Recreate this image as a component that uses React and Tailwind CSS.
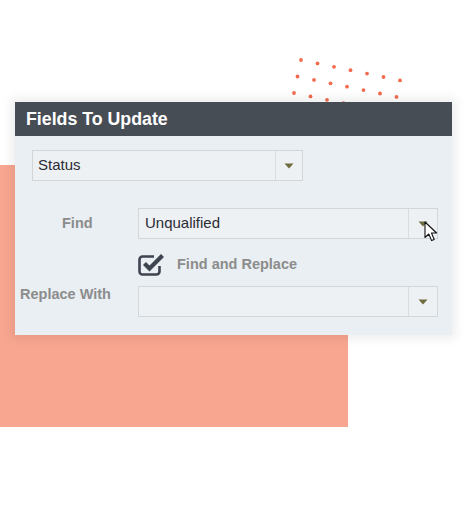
import React from "react";

const dotRows = [
  { x: 301, y: 60 },
  { x: 297.5, y: 76.5 },
  { x: 294, y: 93 },
  { x: 290.5, y: 109.5 },
];

function Dots() {
  const dots = [];
  dotRows.forEach((r, ri) => {
    for (let i = 0; i < 7; i++) {
      dots.push(
        <circle key={ri + "-" + i} cx={r.x + i * 16.5 - 270} cy={r.y + i * 3.4 - 50} r="1.9" fill="#f26b4e" />
      );
    }
  });
  return (
    <svg className="absolute left-[270px] top-[50px]" width="150" height="90" viewBox="0 0 150 90">
      {dots}
    </svg>
  );
}

function Arrow() {
  return (
    <svg width="10" height="6" viewBox="0 0 10 6">
      <polygon points="0.5,0.5 9.5,0.5 5,5.5" fill="#6e6c3c" />
    </svg>
  );
}

function Select({ width, text, btn, pl }) {
  return (
    <div className={`flex h-[31px] border border-[#d2d6d9] bg-[#edf1f3] ${width}`}>
      <div className={`flex flex-1 items-center text-[15px] text-[#2c2c36] ${pl}`}>{text}</div>
      <div className={`flex items-center justify-center border-l border-[#d9dde0] ${btn}`}>
        <Arrow />
      </div>
    </div>
  );
}

function Check() {
  return (
    <svg width="27" height="24" viewBox="0 0 27 24">
      <path
        d="M21.5 13 V18.5 a3 3 0 0 1 -3 3 H4.5 a3 3 0 0 1 -3 -3 V6.5 a3 3 0 0 1 3 -3 H16"
        fill="none"
        stroke="#3e4450"
        strokeWidth="2.6"
      />
      <path d="M6.5 10.5 L11.5 15.5 L24.5 2.5" fill="none" stroke="#3e4450" strokeWidth="4.2" strokeLinejoin="miter" />
    </svg>
  );
}

function Cursor() {
  return (
    <svg className="absolute left-[424px] top-[221px]" width="14" height="22" viewBox="0 0 14 22">
      <path
        d="M1 1 L1 16.5 L4.8 13 L7.6 19.6 L10.2 18.5 L7.5 12 L12.6 12 Z"
        fill="#ffffff"
        stroke="#111111"
        strokeWidth="1.1"
        strokeLinejoin="round"
      />
    </svg>
  );
}

export default function App() {
  return (
    <div
      className="relative w-[465px] h-[528px] overflow-hidden bg-white"
      style={{ fontFamily: '"Liberation Sans", Arial, sans-serif' }}
    >
      <div className="absolute left-0 top-[165px] w-[348px] h-[262px] bg-[#f8a690]" />
      <Dots />
      <div className="relative pt-[102px] pl-[15px]">
        <div className="w-[437px] h-[233px] bg-[#e9eff2] shadow-[0_0_10px_4px_rgba(0,0,0,0.07)]">
          <div className="flex h-[34px] items-center bg-[#474d55] pl-[11px] text-[17.75px] font-bold text-white">
            Fields To Update
          </div>
          <div className="pl-[17px] pt-[14px]">
            <Select width="w-[271px]" text="Status" btn="w-[27px]" pl="pl-[5px]" />
          </div>
          <div className="mt-[27px] grid grid-cols-[123px_300px] items-start">
            <div className="flex h-[31px] items-center pl-[47px] text-[14.5px] font-bold text-[#8c8c8c]">Find</div>
            <Select width="w-[300px]" text="Unqualified" btn="w-[29px]" pl="pl-[6px]" />
            <div />
            <div className="mt-[14px] flex h-[24px] items-center">
              <Check />
              <span className="ml-[12px] text-[14.5px] font-bold text-[#8c8c8c]">Find and Replace</span>
            </div>
            <div className="mt-[9px] pl-[5px] text-[14.5px] font-bold leading-[17px] text-[#8c8c8c]">Replace With</div>
            <div className="mt-[9px]">
              <Select width="w-[300px]" text="" btn="w-[29px]" pl="pl-[6px]" />
            </div>
          </div>
        </div>
      </div>
      <Cursor />
    </div>
  );
}
